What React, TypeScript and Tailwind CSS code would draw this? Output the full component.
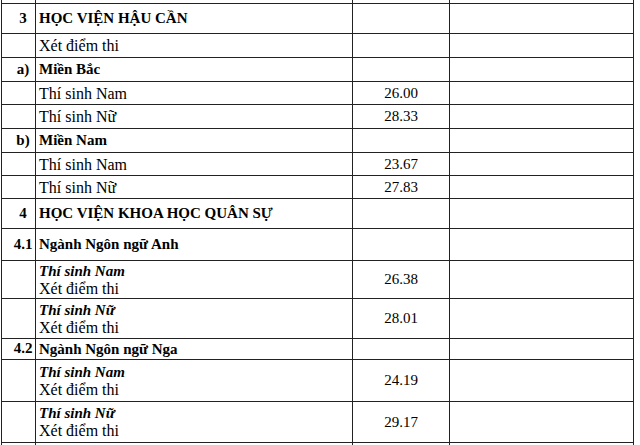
import React from "react";

type Row = {
  h: string;
  no?: string;
  text?: string;
  sub?: string;
  score?: string;
  bold?: boolean;
};

const rows: Row[] = [
  { h: "h-[30px]", no: "3", text: "HỌC VIỆN HẬU CẦN", bold: true },
  { h: "h-[24px]", text: "Xét điểm thi" },
  { h: "h-[24px]", no: "a)", text: "Miền Bắc", bold: true },
  { h: "h-[23px]", text: "Thí sinh Nam", score: "26.00" },
  { h: "h-[24px]", text: "Thí sinh Nữ", score: "28.33" },
  { h: "h-[24px]", no: "b)", text: "Miền Nam", bold: true },
  { h: "h-[23px]", text: "Thí sinh Nam", score: "23.67" },
  { h: "h-[23px]", text: "Thí sinh Nữ", score: "27.83" },
  { h: "h-[30px]", no: "4", text: "HỌC VIỆN KHOA HỌC QUÂN SỰ", bold: true },
  { h: "h-[32px]", no: "4.1", text: "Ngành Ngôn ngữ Anh", bold: true },
  { h: "h-[38px]", sub: "Thí sinh Nam", text: "Xét điểm thi", score: "26.38" },
  { h: "h-[40px]", sub: "Thí sinh Nữ", text: "Xét điểm thi", score: "28.01" },
  { h: "h-[21px]", no: "4.2", text: "Ngành Ngôn ngữ Nga", bold: true },
  { h: "h-[42px]", sub: "Thí sinh Nam", text: "Xét điểm thi", score: "24.19" },
  { h: "h-[41px]", sub: "Thí sinh Nữ", text: "Xét điểm thi", score: "29.17" },
  { h: "h-[30px]" },
];

const cell = "border border-[#222] align-middle p-0";

export default function App() {
  return (
    <div
      className="w-[640px] h-[445px] overflow-hidden bg-white text-black pl-[1px]"
      style={{ fontFamily: '"Liberation Serif", "Times New Roman", serif' }}
    >
      <table className="table-fixed border-collapse w-[633px] text-[15px] leading-[17px]">
        <colgroup>
          <col className="w-[34px]" />
          <col className="w-[317px]" />
          <col className="w-[97px]" />
          <col />
        </colgroup>
        <tbody>
          <tr className="h-[3px]">
            <td className={`${cell} border-t-0`} />
            <td className={`${cell} border-t-0`} />
            <td className={`${cell} border-t-0`} />
            <td className={`${cell} border-t-0`} />
          </tr>
          {rows.map((r, i) => (
            <tr key={i} className={r.h}>
              <td className={`${cell} text-center pl-[9px] font-bold`}>{r.no}</td>
              <td className={`${cell} px-[3px] pt-[1px]`}>
                {r.sub && <div className="font-bold italic">{r.sub}</div>}
                {r.text && (
                  <div className={r.bold ? "font-bold" : "text-[16px]"}>{r.text}</div>
                )}
              </td>
              <td className={`${cell} text-center pt-[1px]`}>{r.score}</td>
              <td className={cell} />
            </tr>
          ))}
        </tbody>
      </table>
    </div>
  );
}
